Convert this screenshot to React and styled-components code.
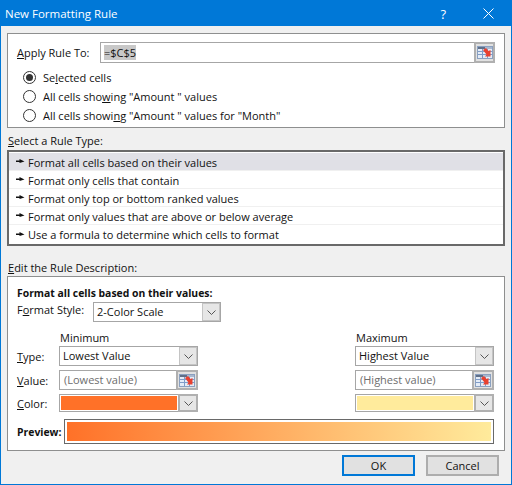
import { createGlobalStyle, styled } from "styled-components";

const RULE_TYPES = [
  "Format all cells based on their values",
  "Format only cells that contain",
  "Format only top or bottom ranked values",
  "Format only values that are above or below average",
  "Use a formula to determine which cells to format",
];

function RefIcon() {
  return (
    <svg width="16" height="13" viewBox="0 0 16 13">
      <rect x="0.5" y="0.5" width="15" height="12" fill="#e4ecf7" stroke="#8aa0c0" />
      <rect x="1" y="1" width="7" height="2" fill="#5f6f88" />
      <rect x="8" y="1" width="7" height="2" fill="#a9b8cf" />
      <path d="M1 5.5h14M1 8.5h14M5.5 3v9M10.5 3v9" stroke="#7f9cc8" fill="none" />
      <path d="M6 4l3-2 2.5 3 2-1v6.5H8l1.5-2z" fill="#e8402f" />
    </svg>
  );
}

function Chevron() {
  return (
    <svg width="9" height="5" viewBox="0 0 9 5">
      <path d="M0.5 0.5L4.5 4.5L8.5 0.5" fill="none" stroke="#555" />
    </svg>
  );
}

function Pointer() {
  return (
    <svg width="9" height="7" viewBox="0 0 9 7">
      <path d="M0 2.5h3.5V1l5 2.5-5 1.5v-1H0z" fill="#111" />
    </svg>
  );
}

function Select({ value, width }) {
  return (
    <SelectBox $width={width}>
      <SelectValue>{value}</SelectValue>
      <DropButton>
        <Chevron />
      </DropButton>
    </SelectBox>
  );
}

function ColorSelect({ color }) {
  return (
    <ColorBox>
      <Swatch $color={color} />
      <ColorDrop>
        <Chevron />
      </ColorDrop>
    </ColorBox>
  );
}

function RefInput({ value }) {
  return (
    <ValueBox>
      <ValueText>{value}</ValueText>
      <RefButton>
        <RefIcon />
      </RefButton>
    </ValueBox>
  );
}

export default function App() {
  return (
    <Window>
      <GlobalStyle />
      <TitleBar>
        <Title>New Formatting Rule</Title>
        <HelpGlyph>?</HelpGlyph>
        <CloseGlyph viewBox="0 0 11 11">
          <path d="M0.5 0.5L10.5 10.5M10.5 0.5L0.5 10.5" stroke="#fff" fill="none" />
        </CloseGlyph>
      </TitleBar>
      <Body>
        <ApplyPanel>
          <ApplyRow>
            <ApplyLabel>
              <u>A</u>pply Rule To:
            </ApplyLabel>
            <RangeInput>
              <RangeText>
                <Selected>=$C$5</Selected>
              </RangeText>
              <RangeButton>
                <RefIcon />
              </RangeButton>
            </RangeInput>
          </ApplyRow>
          <RadioList>
            <RadioRow>
              <Radio $checked />
              <span>
                Se<u>l</u>ected cells
              </span>
            </RadioRow>
            <RadioRow>
              <Radio />
              <span>
                All cells sho<u>w</u>ing "Amount " values
              </span>
            </RadioRow>
            <RadioRow>
              <Radio />
              <span>
                All cells showi<u>n</u>g "Amount " values for "Month"
              </span>
            </RadioRow>
          </RadioList>
        </ApplyPanel>

        <SectionLabel>
          <u>S</u>elect a Rule Type:
        </SectionLabel>
        <RuleList>
          {RULE_TYPES.map((rule, i) => (
            <RuleRow key={rule} $selected={i === 0}>
              <Pointer />
              <RuleText>{rule}</RuleText>
            </RuleRow>
          ))}
        </RuleList>

        <EditLabel>
          <u>E</u>dit the Rule Description:
        </EditLabel>
        <EditPanel>
          <BoldTitle>Format all cells based on their values:</BoldTitle>
          <StyleRow>
            <StyleLabel>
              F<u>o</u>rmat Style:
            </StyleLabel>
            <Select value="2-Color Scale" width="128px" />
          </StyleRow>
          <ScaleGrid>
            <span />
            <ColumnHead>Minimum</ColumnHead>
            <span />
            <ColumnHead>Maximum</ColumnHead>

            <span>
              <u>T</u>ype:
            </span>
            <Select value="Lowest Value" />
            <span />
            <Select value="Highest Value" />

            <span>
              <u>V</u>alue:
            </span>
            <RefInput value="(Lowest value)" />
            <span />
            <RefInput value="(Highest value)" />

            <span>
              <u>C</u>olor:
            </span>
            <ColorSelect color="#ff7128" />
            <span />
            <ColorSelect color="#ffeb9c" />
          </ScaleGrid>
          <PreviewRow>
            <PreviewLabel>Preview:</PreviewLabel>
            <PreviewBox>
              <PreviewFill />
            </PreviewBox>
          </PreviewRow>
        </EditPanel>

        <Footer>
          <DialogButton $primary>OK</DialogButton>
          <DialogButton>Cancel</DialogButton>
        </Footer>
      </Body>
    </Window>
  );
}

const GlobalStyle = createGlobalStyle`
  html, body {
    margin: 0;
    padding: 0;
    background: #f0f0f0;
  }
  * {
    box-sizing: border-box;
  }
  u {
    text-underline-offset: 1px;
  }
`;

const Window = styled.div`
  width: 512px;
  height: 485px;
  display: flex;
  flex-direction: column;
  border: 1px solid #0078d7;
  background: #f0f0f0;
  color: #111;
  font-family: "Open Sans", sans-serif;
  font-size: 11px;
  overflow: hidden;
`;

const TitleBar = styled.div`
  height: 25px;
  flex-shrink: 0;
  display: flex;
  align-items: center;
  padding: 0 17px 0 4px;
  background: #0078d7;
  color: #fff;
`;

const Title = styled.div`
  flex: 1;
  font-size: 11.5px;
`;

const HelpGlyph = styled.div`
  font-size: 13px;
  margin-right: 37px;
`;

const CloseGlyph = styled.svg`
  width: 11px;
  height: 11px;
`;

const Body = styled.div`
  flex: 1;
  display: flex;
  flex-direction: column;
  padding: 7px 6px 0;
`;

const ApplyPanel = styled.div`
  height: 95px;
  flex-shrink: 0;
  background: #fff;
  border: 1px solid #8e8f8f;
  padding: 8px 9px 0;
`;

const ApplyRow = styled.div`
  display: flex;
  align-items: center;
  height: 21px;
`;

const ApplyLabel = styled.div`
  width: 83px;
`;

const RangeInput = styled.div`
  flex: 1;
  height: 21px;
  display: flex;
  border: 1px solid #a6a6a6;
  background: #fff;
`;

const RangeText = styled.div`
  flex: 1;
  padding-left: 3px;
  line-height: 19px;
`;

const Selected = styled.span`
  background: #c8c8c8;
`;

const RangeButton = styled.div`
  width: 21px;
  margin: -1px -1px -1px 0;
  display: flex;
  align-items: center;
  justify-content: center;
  background: #e1e1e1;
  border: 2px solid #b0b0b0;
`;

const RadioList = styled.div`
  display: flex;
  flex-direction: column;
  margin-top: 5px;
  padding-left: 6px;
`;

const RadioRow = styled.div`
  height: 19px;
  display: flex;
  align-items: center;
  gap: 7px;
`;

const Radio = styled.div`
  width: 13px;
  height: 13px;
  flex-shrink: 0;
  display: flex;
  align-items: center;
  justify-content: center;
  border: 1px solid #333;
  border-radius: 50%;
  &::after {
    content: "";
    width: 7px;
    height: 7px;
    border-radius: 50%;
    background: ${(p) => (p.$checked ? "#333" : "transparent")};
  }
`;

const SectionLabel = styled.div`
  height: 22px;
  flex-shrink: 0;
  line-height: 16px;
  padding: 5px 0 0 1px;
`;

const EditLabel = styled(SectionLabel)`
  height: 30px;
  padding-top: 14px;
`;

const RuleList = styled.div`
  height: 96px;
  flex-shrink: 0;
  display: flex;
  flex-direction: column;
  padding-top: 1px;
  background: #fff;
  border: 2px solid #696969;
`;

const RuleRow = styled.div`
  height: 18px;
  flex-shrink: 0;
  display: flex;
  align-items: center;
  gap: 3px;
  padding-left: 7px;
  background: ${(p) => (p.$selected ? "#e0e0e6" : "#fff")};
  border-bottom: 1px solid #f0f0f0;
  &:last-child {
    border-bottom: none;
  }
`;

const RuleText = styled.span`
  margin-top: 1px;
`;

const EditPanel = styled.div`
  height: 175px;
  flex-shrink: 0;
  background: #fff;
  border: 1px solid #8e8f8f;
  padding: 9px 9px 0;
`;

const BoldTitle = styled.div`
  font-weight: 700;
  font-size: 10.4px;
  line-height: 15px;
`;

const StyleRow = styled.div`
  display: flex;
  margin-top: 1px;
`;

const StyleLabel = styled.div`
  width: 76px;
  line-height: 15px;
`;

const SelectBox = styled.div`
  width: ${(p) => p.$width || "100%"};
  height: 20px;
  display: flex;
  border: 1px solid #a6a6a6;
  background: #fff;
`;

const SelectValue = styled.div`
  flex: 1;
  padding-left: 3px;
  line-height: 18px;
`;

const DropButton = styled.div`
  width: 18px;
  display: flex;
  align-items: center;
  justify-content: center;
  background: #e6e6e6;
  border: 1px solid #c4c4c4;
`;

const ColorDrop = styled(DropButton)`
  width: 20px;
  margin: -1px -1px -1px 0;
  border: 2px solid #b0b0b0;
`;

const ScaleGrid = styled.div`
  display: grid;
  grid-template-columns: 42px 139px 157px 139px;
  grid-template-rows: 20px 20px 20px 18px;
  row-gap: 4px;
  align-items: center;
`;

const ColumnHead = styled.div`
  padding-left: 1px;
  align-self: end;
  margin-bottom: -3px;
`;

const ValueBox = styled.div`
  height: 20px;
  display: flex;
  border: 1px solid #a6a6a6;
  background: #fff;
`;

const ValueText = styled.div`
  flex: 1;
  padding-left: 4px;
  line-height: 18px;
  color: #6d6d6d;
`;

const RefButton = styled(RangeButton)`
  width: 22px;
`;

const ColorBox = styled.div`
  height: 18px;
  display: flex;
  border: 1px solid #a6a6a6;
  background: #fff;
`;

const Swatch = styled.div`
  flex: 1;
  margin: 1px;
  background: ${(p) => p.$color};
`;

const PreviewRow = styled.div`
  display: flex;
  align-items: center;
  margin-top: 7px;
`;

const PreviewLabel = styled.div`
  width: 47px;
  font-weight: 700;
  font-size: 10.4px;
`;

const PreviewBox = styled.div`
  width: 430px;
  height: 25px;
  padding: 2px;
  border: 1px solid #696969;
  background: #fff;
`;

const PreviewFill = styled.div`
  height: 100%;
  background: linear-gradient(to right, #ff7128, #ffeb9c);
`;

const Footer = styled.div`
  flex: 1;
  display: flex;
  justify-content: flex-end;
  align-items: flex-start;
  gap: 11px;
  padding: 4px 6px 0 0;
`;

const DialogButton = styled.div`
  width: 73px;
  height: 21px;
  display: flex;
  align-items: center;
  justify-content: center;
  background: #e1e1e1;
  border: 2px solid ${(p) => (p.$primary ? "#0078d7" : "#adadad")};
`;
